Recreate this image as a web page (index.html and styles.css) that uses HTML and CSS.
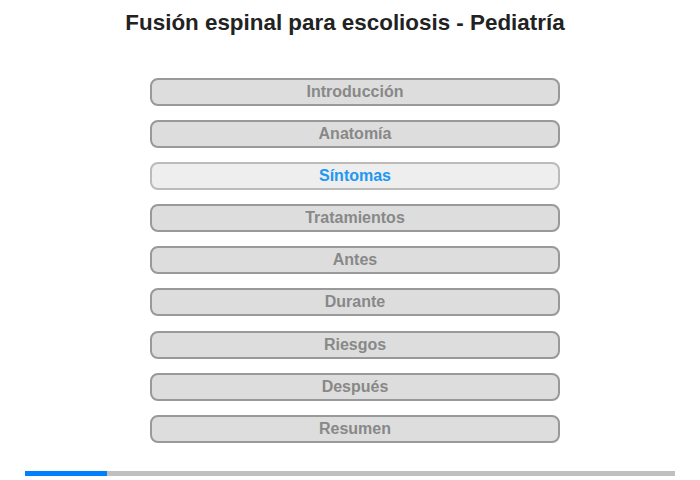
FILE: index.html
```html
<!DOCTYPE html>
<html lang="es">
<head>
    <meta charset="UTF-8">
    <meta name="viewport" content="width=device-width, initial-scale=1.0">
    <title>Fusión espinal para escoliosis - Pediatría</title>
    <link rel="stylesheet" href="styles.css">
</head>
<body>
    <div class="page">
        <h1>Fusión espinal para escoliosis - Pediatría</h1>
        <ul class="menu">
            <li><button class="menu-btn">Introducción</button></li>
            <li><button class="menu-btn">Anatomía</button></li>
            <li><button class="menu-btn active">Síntomas</button></li>
            <li><button class="menu-btn">Tratamientos</button></li>
            <li><button class="menu-btn">Antes</button></li>
            <li><button class="menu-btn">Durante</button></li>
            <li><button class="menu-btn">Riesgos</button></li>
            <li><button class="menu-btn">Después</button></li>
            <li><button class="menu-btn">Resumen</button></li>
        </ul>
        <div class="progress">
            <div class="progress-fill" style="width: 12.6%"></div>
        </div>
    </div>
</body>
</html>
```

FILE: styles.css
```css
body {
    font-family: "Liberation Sans", Arial, sans-serif;
    margin: 0;
    padding: 0;
    background-color: #fff;
}
.page {
    width: 700px;
    height: 480px;
    overflow: hidden;
}
h1 {
    margin: 10px 0 0 0;
    padding-right: 10px;
    font-size: 22.4px;
    line-height: 25px;
    text-align: center;
    color: #222;
}
.menu {
    list-style: none;
    margin: 43px 0 0 150px;
    padding: 0;
    width: 410px;
    display: flex;
    flex-direction: column;
    gap: 14.1px;
}
.menu-btn {
    display: block;
    width: 100%;
    height: 28px;
    padding: 0;
    font-family: inherit;
    font-size: 16px;
    font-weight: bold;
    color: #888;
    background-color: #ddd;
    border: 2px solid #999;
    border-radius: 8px;
    cursor: pointer;
}
.menu-btn.active {
    color: #2196f3;
    background-color: #eee;
    border-color: #bbb;
}
.progress {
    margin: 28px 25px 0 25px;
    height: 5px;
    background-color: #c0c0c0;
}
.progress-fill {
    height: 100%;
    background-color: #0080ff;
}
```
